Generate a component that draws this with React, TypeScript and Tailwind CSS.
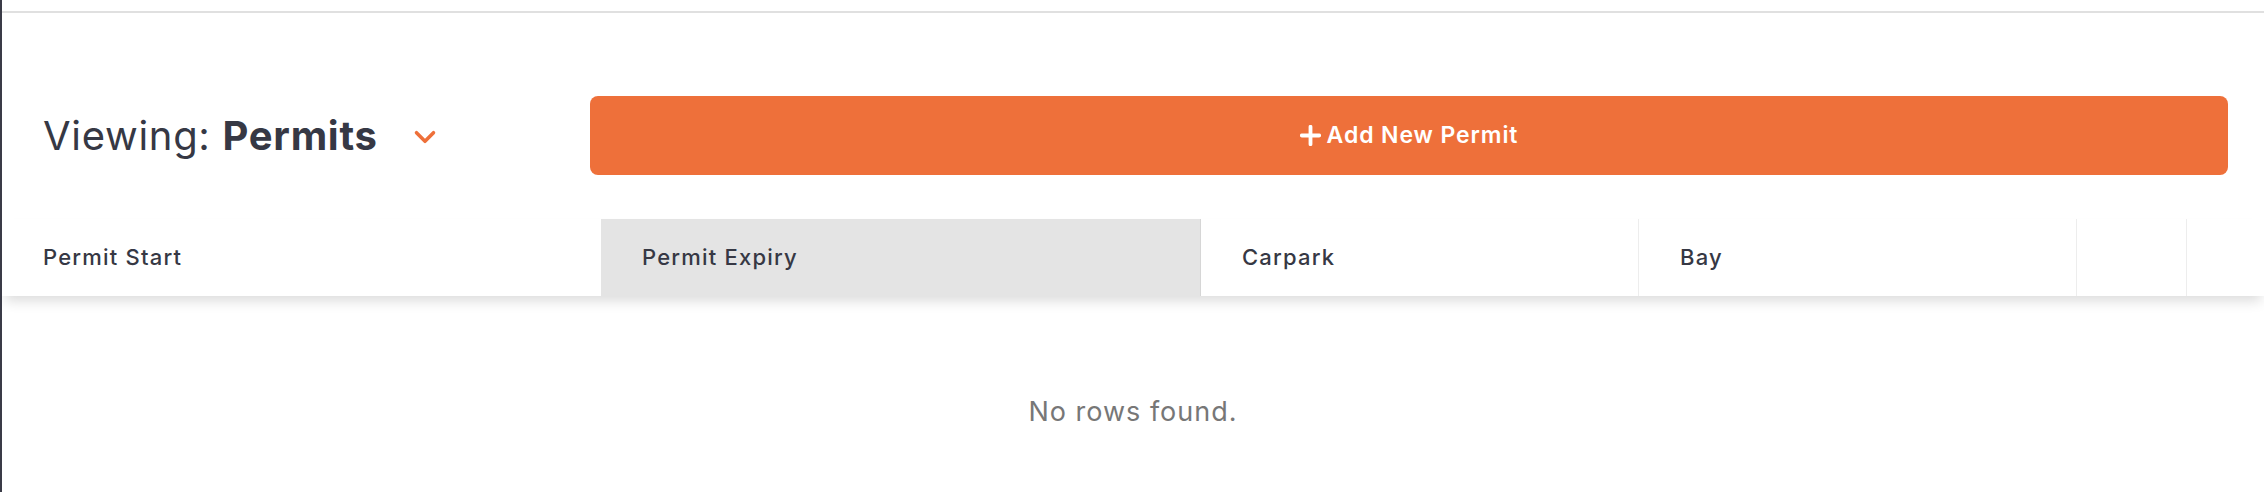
import React from 'react';
import { ChevronDown } from 'lucide-react';

type Column = {
  key: string;
  label: string;
  width: string;
  active?: boolean;
};

const columns: Column[] = [
  { key: 'start', label: 'Permit Start', width: 'w-[599px]' },
  { key: 'expiry', label: 'Permit Expiry', width: 'w-[600px]', active: true },
  { key: 'carpark', label: 'Carpark', width: 'w-[438px]' },
  { key: 'bay', label: 'Bay', width: 'w-[438px]' },
  { key: 'edit', label: '', width: 'w-[110px]' },
  { key: 'delete', label: '', width: 'flex-1' },
];

const PlusIcon: React.FC = () => (
  <svg width="21" height="21" viewBox="0 0 21 21" className="shrink-0">
    <path d="M10.5 1.8v17.4M1.8 10.5h17.4" stroke="currentColor" strokeWidth="3.8" strokeLinecap="round" />
  </svg>
);

const App: React.FC = () => {
  return (
    <div className="min-h-[492px] w-full bg-white border-l-2 border-[#3a3b47] font-['Inter','Liberation_Sans',sans-serif] text-[#363844] overflow-hidden">
      {/* top divider from the section above */}
      <div className="h-[11px]" />
      <div className="h-[2px] bg-[#e0e0e0]" />

      {/* toolbar */}
      <div className="flex items-center pt-[83px] pl-[41px] pr-[36px]">
        <div className="w-[547px] shrink-0 flex items-center">
          <h2 className="text-[40px] leading-none tracking-[0.7px]">
            Viewing: <span className="font-bold">Permits</span>
          </h2>
          <button className="ml-[30px] mt-[2px] text-[#ee703a]">
            <ChevronDown className="w-[34px] h-[34px]" strokeWidth={2.5} />
          </button>
        </div>
        <button className="flex-1 h-[79px] rounded-lg bg-[#ee703a] text-white flex items-center justify-center gap-[6px]">
          <PlusIcon />
          <span className="text-[23px] font-semibold tracking-[0.9px]">Add New Permit</span>
        </button>
      </div>

      {/* table header */}
      <div className="mt-[44px] flex h-[77px] bg-white shadow-[0_8px_12px_-3px_rgba(0,0,0,0.14)]">
        {columns.map((col) => (
          <div
            key={col.key}
            className={`${col.width} shrink-0 flex items-center px-[41px] border-r ${
              col.active ? 'bg-[#e4e4e4] border-[#d6d6d6]' : 'bg-white border-[#ededed]'
            } ${col.key === 'start' ? 'border-r-0' : ''}`}
          >
            <span className="text-[22px] font-medium tracking-[1.2px] whitespace-nowrap">{col.label}</span>
          </div>
        ))}
      </div>

      {/* empty state */}
      <div className="flex justify-center pt-[96px] pb-[40px]">
        <p className="text-[27px] tracking-[1px] text-[#777777]">No rows found.</p>
      </div>
    </div>
  );
};

export default App;
